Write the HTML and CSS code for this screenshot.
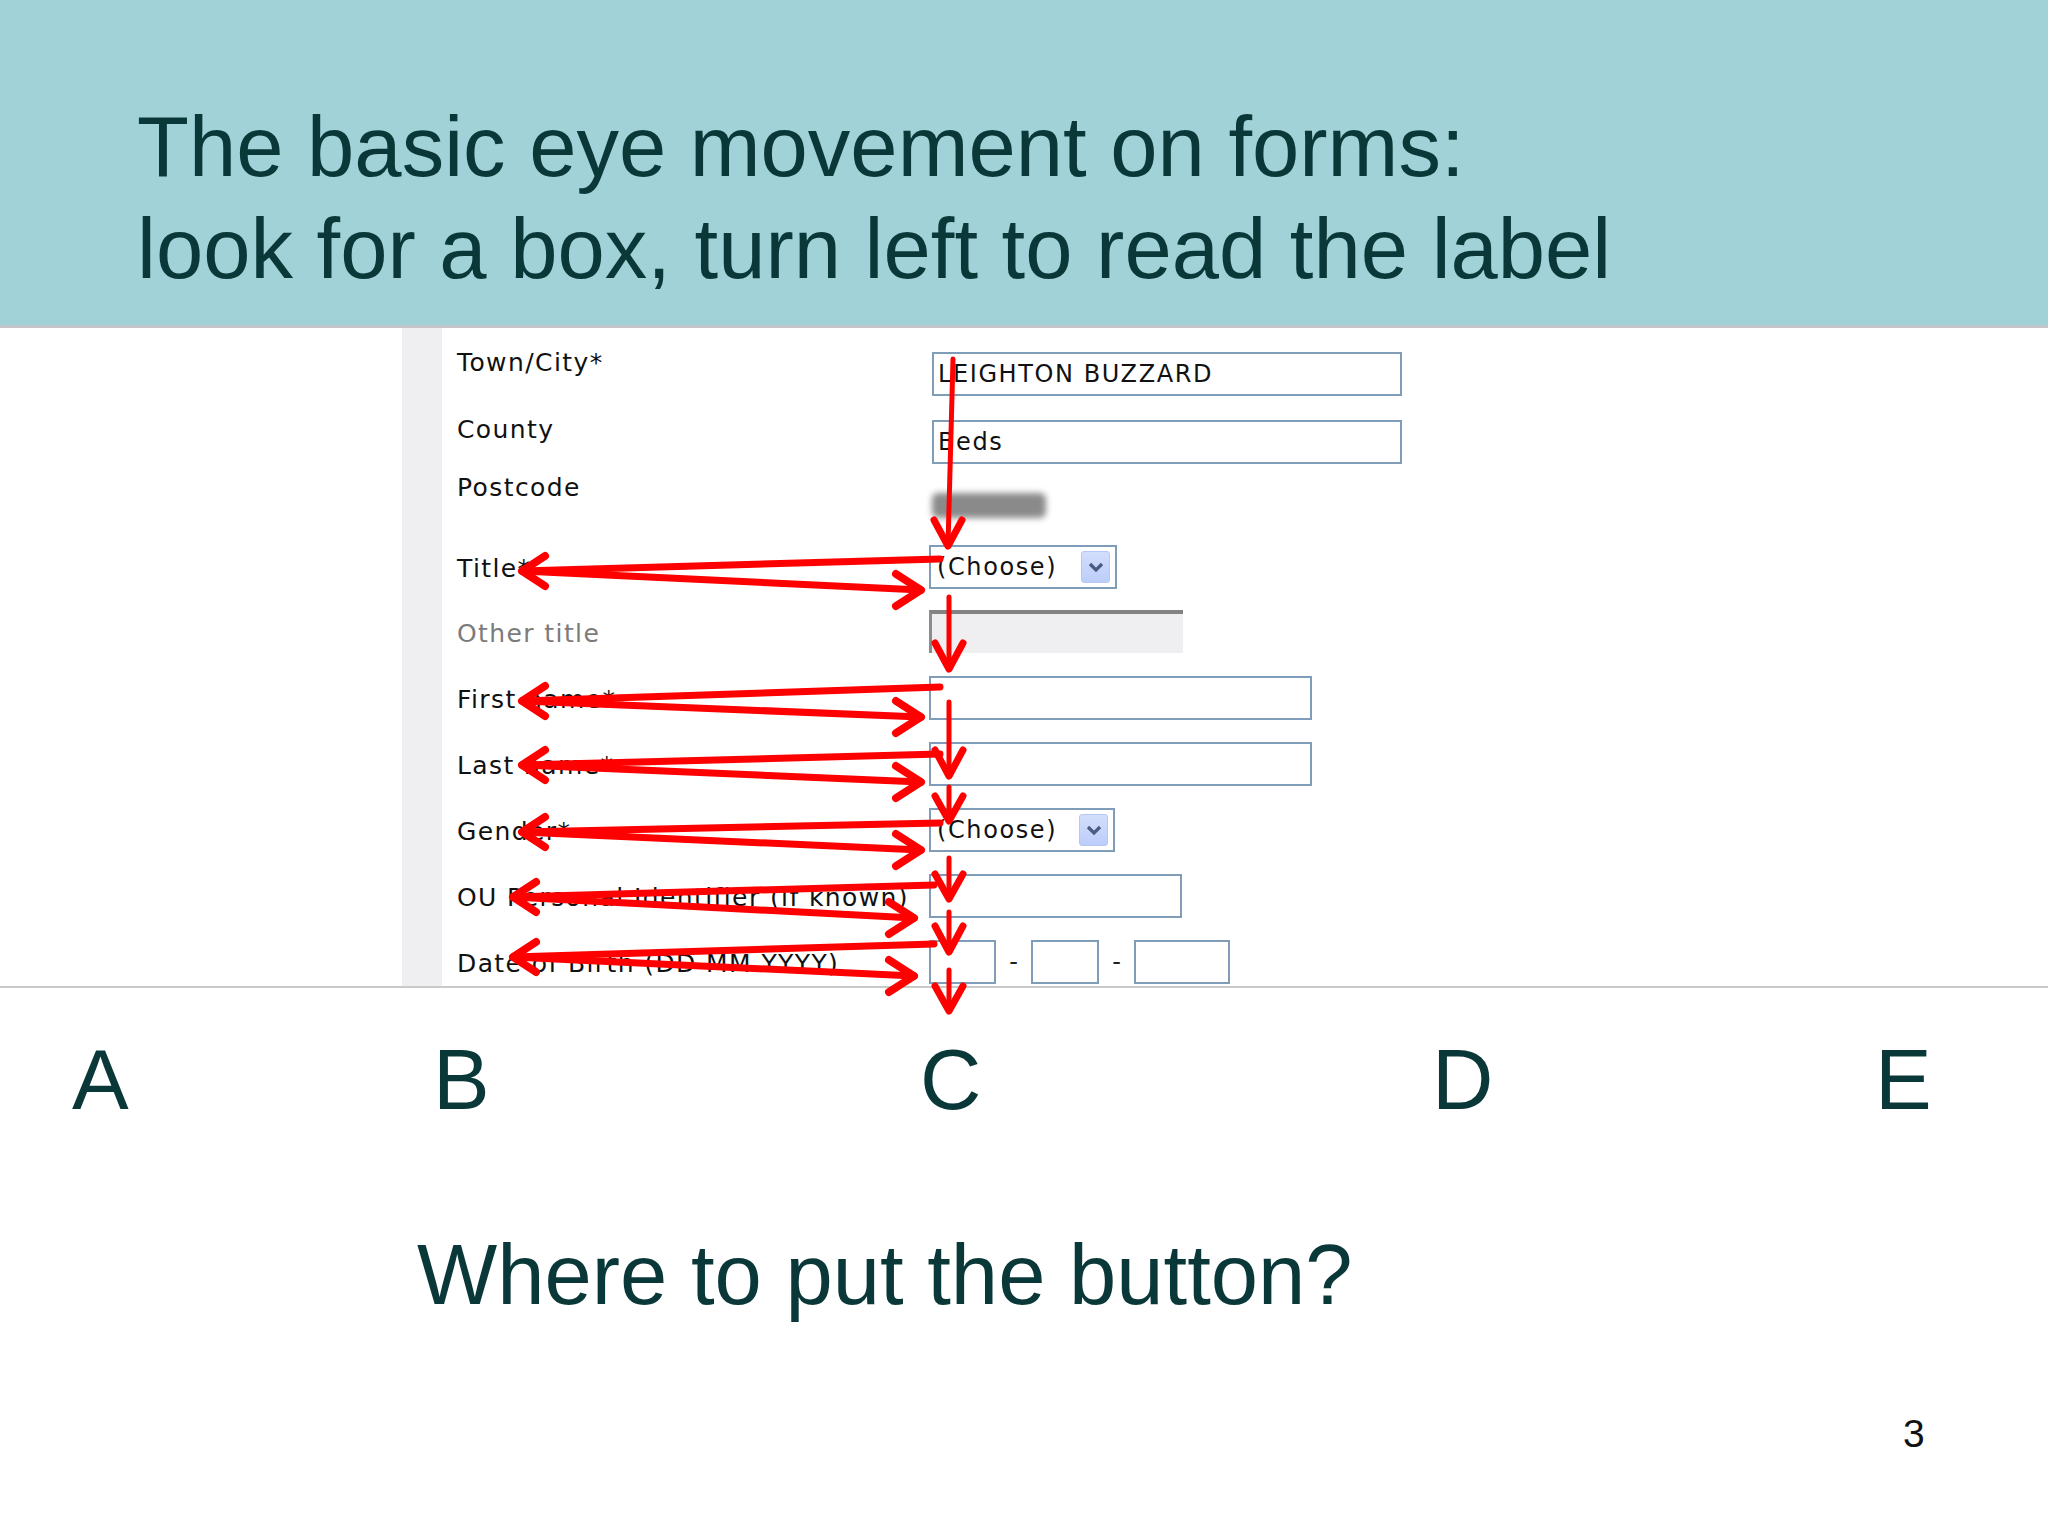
FILE: index.html
```html
<!DOCTYPE html>
<html>
<head>
<meta charset="utf-8">
<link rel="stylesheet" href="styles.css">
</head>
<body>
<div class="page">
  <header class="head">
    <h1 class="title">The basic eye movement on forms:<br>look for a box, turn left to read the label</h1>
  </header>

  <section class="shot">
    <div class="bar"></div>
    <div class="form">
      <div class="row r-town">
        <div class="lbl l-town">Town/City*</div>
        <div class="inp w-long"><span class="val">LEIGHTON BUZZARD</span></div>
      </div>
      <div class="row r-county">
        <div class="lbl l-county">County</div>
        <div class="inp w-long"><span class="val">Beds</span></div>
      </div>
      <div class="row r-post">
        <div class="lbl l-post">Postcode</div>
        <div class="blob"></div>
      </div>
      <div class="row r-title">
        <div class="lbl">Title*</div>
        <div class="sel"><span class="val">(Choose)</span><span class="btn"><svg width="16" height="12" viewBox="0 0 16 12"><path d="M2 3 L8 9 L14 3" fill="none" stroke="#4a5a80" stroke-width="3.2"/></svg></span></div>
      </div>
      <div class="row">
        <div class="lbl dim">Other title</div>
        <div class="dis"></div>
      </div>
      <div class="row">
        <div class="lbl">First name*</div>
        <div class="inp w-mid"></div>
      </div>
      <div class="row">
        <div class="lbl">Last name*</div>
        <div class="inp w-mid"></div>
      </div>
      <div class="row">
        <div class="lbl">Gender*</div>
        <div class="sel s-gender"><span class="val">(Choose)</span><span class="btn"><svg width="16" height="12" viewBox="0 0 16 12"><path d="M2 3 L8 9 L14 3" fill="none" stroke="#4a5a80" stroke-width="3.2"/></svg></span></div>
      </div>
      <div class="row">
        <div class="lbl">OU Personal Identifier (if known)</div>
        <div class="inp w-short"></div>
      </div>
      <div class="row r-dob">
        <div class="lbl">Date of Birth (DD MM YYYY)</div>
        <div class="dob">
          <div class="inp w-dd"></div><span class="dash">-</span>
          <div class="inp w-mm"></div><span class="dash">-</span>
          <div class="inp w-yy"></div>
        </div>
      </div>
    </div>
  </section>

  <div class="choices">
    <span>A</span><span>B</span><span>C</span><span>D</span><span>E</span>
  </div>

  <p class="question">Where to put the button?</p>
  <p class="num">3</p>

  <svg class="arrows" width="2048" height="1536" viewBox="0 0 2048 1536">
    <g fill="none" stroke="#ff0000" stroke-linecap="round" stroke-linejoin="round">
      <g stroke-width="5">
        <path d="M953 359 L948 545"/>
        <path d="M949 597 L949 668"/>
        <path d="M949 702 L949 775"/>
        <path d="M949 787 L949 820"/>
        <path d="M949 858 L949 898"/>
        <path d="M949 912 L949 951"/>
        <path d="M949 970 L949 1010"/>
      </g>
      <g stroke-width="7">
        <path d="M934 520 L948 546 L962 520"/>
        <path d="M935 643 L949 669 L963 643"/>
        <path d="M935 750 L949 776 L963 750"/>
        <path d="M935 796 L949 821 L963 796"/>
        <path d="M935 874 L949 899 L963 874"/>
        <path d="M935 926 L949 952 L963 926"/>
        <path d="M935 986 L949 1011 L963 986"/>
      </g>
      <g stroke-width="7">
        <path d="M940 559 L522 571 L921 590"/>
        <path d="M940 687 L522 701 L921 717"/>
        <path d="M940 754 L522 765 L921 782"/>
        <path d="M940 823 L522 832 L921 850"/>
        <path d="M934 885 L513 897 L914 918"/>
        <path d="M934 944 L513 957 L914 976"/>
      </g>
      <g stroke-width="8">
        <path d="M545 556 L522 571 L545 586"/>
        <path d="M896 574 L921 590 L896 606"/>
        <path d="M545 686 L522 701 L545 716"/>
        <path d="M896 701 L921 717 L896 733"/>
        <path d="M545 750 L522 765 L545 780"/>
        <path d="M896 766 L921 782 L896 798"/>
        <path d="M545 817 L522 832 L545 847"/>
        <path d="M896 834 L921 850 L896 866"/>
        <path d="M536 882 L513 897 L536 912"/>
        <path d="M889 902 L914 918 L889 934"/>
        <path d="M536 942 L513 957 L536 972"/>
        <path d="M889 960 L914 976 L889 992"/>
      </g>
    </g>
  </svg>
</div>
</body>
</html>
```

FILE: styles.css
```css
* { box-sizing: border-box; }
html, body { margin: 0; padding: 0; }
body { background: #ffffff; font-family: "Liberation Sans", Arial, sans-serif; }

.page { position: relative; width: 2048px; height: 1536px; overflow: hidden; background: #fff; }

.head {
  height: 328px;
  background: #a1d2d8;
  border-bottom: 3px solid #c2c6c8;
  padding: 96px 0 0 137px;
}
.title {
  margin: 0;
  font-family: "Liberation Sans", Arial, sans-serif;
  font-weight: normal;
  font-size: 85px;
  line-height: 102px;
  color: #0a3738;
  letter-spacing: 0;
}

.shot {
  display: flex;
  height: 660px;
  border-bottom: 2px solid #c9c9c9;
  padding-left: 402px;
}
.bar { width: 40px; background: #efeef1; }
.form { padding-left: 15px; flex: 1; }

.row { display: flex; align-items: flex-start; height: 66px; padding-top: 10px; }
.r-town { height: 77px; padding-top: 24px; }
.r-county { height: 64px; padding-top: 15px; }
.r-post { height: 66px; padding-top: 24px; }
.r-title { height: 65px; }
.r-dob { height: 60px; }

.lbl {
  width: 472px;
  flex: none;
  font-family: "DejaVu Sans", Verdana, sans-serif;
  font-size: 25px;
  letter-spacing: 1.4px;
  line-height: 30px;
  color: #111;
  margin-top: 9px;
}
.l-town { margin-top: -4px; }
.l-county { margin-top: -5px; }
.l-post { margin-top: -20px; }
.dim { color: #7b7b7b; }

.inp {
  height: 44px;
  border: 2px solid #7f9db9;
  background: #fff;
  display: flex;
  align-items: center;
  padding-left: 4px;
}
.val {
  font-family: "DejaVu Sans", Verdana, sans-serif;
  font-size: 24px;
  letter-spacing: 1.6px;
  color: #111;
  line-height: 30px;
}
.w-long { width: 470px; margin-left: 3px; }
.w-mid { width: 383px; }
.w-short { width: 253px; }
.w-dd { width: 67px; }
.w-mm { width: 68px; }
.w-yy { width: 96px; }

.blob {
  width: 114px;
  height: 25px;
  margin-left: 3px;
  background: #8a8a8a;
  border-radius: 6px;
  filter: blur(3px);
}

.sel {
  width: 188px;
  height: 44px;
  border: 2px solid #7f9db9;
  display: flex;
  align-items: center;
  justify-content: space-between;
  padding: 0 5px 0 6px;
}
.s-gender { width: 186px; }
.btn {
  width: 29px;
  height: 32px;
  background: linear-gradient(#d3defc, #bccdfa);
  border: 1px solid #b7c7f3;
  border-radius: 3px;
  display: flex;
  align-items: center;
  justify-content: center;
}

.dis {
  width: 254px;
  height: 43px;
  background: #efeef0;
  border-top: 4px solid #838383;
  border-left: 3px solid #8c8c8c;
}

.dob { display: flex; align-items: center; }
.dash {
  font-family: "DejaVu Sans", Verdana, sans-serif;
  font-size: 24px;
  color: #222;
  width: 35px;
  text-align: center;
}

.choices {
  display: grid;
  grid-template-columns: 361px 487px 512px 443px 200px;
  padding-left: 72px;
  margin-top: 42px;
  font-size: 85px;
  line-height: 100px;
  color: #0a3738;
}

.question {
  margin: 95px 0 0 0;
  padding-left: 417px;
  font-size: 85px;
  line-height: 100px;
  color: #0a3738;
}

.num {
  margin: 89px 0 0 0;
  padding-left: 1903px;
  font-size: 39px;
  line-height: 40px;
  color: #111;
}

.arrows { position: absolute; left: 0; top: 0; pointer-events: none; }
```
